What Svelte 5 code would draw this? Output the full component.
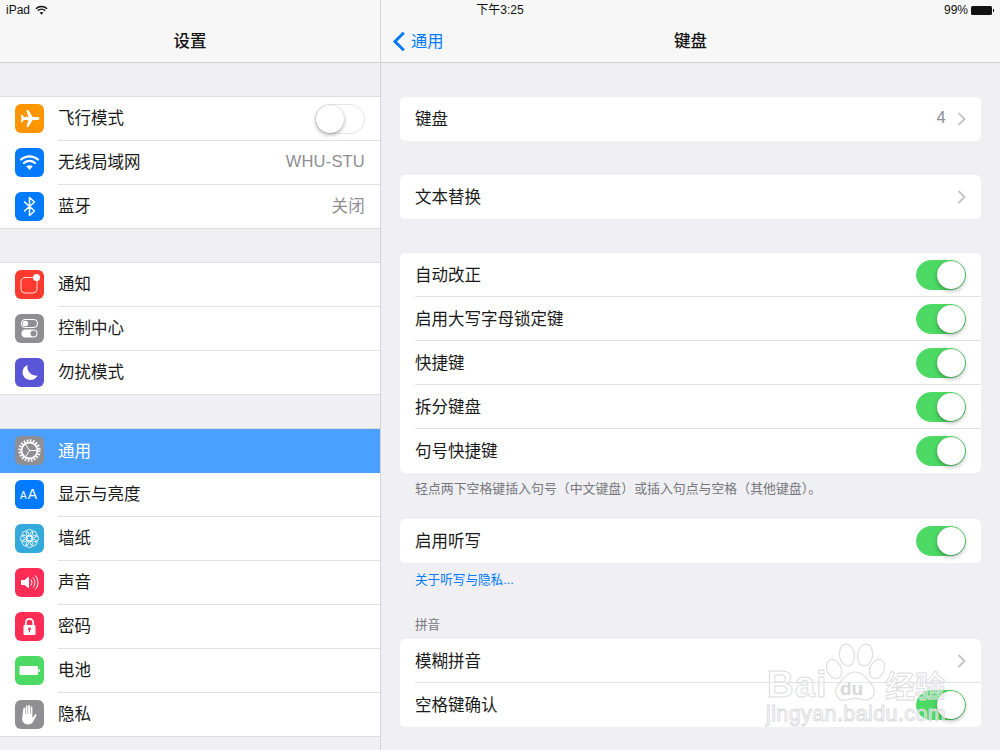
<script>
    const sidebarGroups = [
        [
            { id: 'plane', label: '飞行模式', bg: '#ff9500', toggle: true },
            { id: 'wifi', label: '无线局域网', bg: '#007aff', value: 'WHU-STU' },
            { id: 'bluetooth', label: '蓝牙', bg: '#007aff', value: '关闭' }
        ],
        [
            { id: 'notify', label: '通知', bg: '#ff3b30' },
            { id: 'control', label: '控制中心', bg: '#8e8e93' },
            { id: 'moon', label: '勿扰模式', bg: '#5856d6' }
        ],
        [
            { id: 'gear', label: '通用', bg: '#8e8e93', selected: true },
            { id: 'display', label: '显示与亮度', bg: '#007aff' },
            { id: 'flower', label: '墙纸', bg: '#34aadc' },
            { id: 'sound', label: '声音', bg: '#ff2d55' },
            { id: 'lock', label: '密码', bg: '#ff2d55' },
            { id: 'battery', label: '电池', bg: '#4cd964' },
            { id: 'hand', label: '隐私', bg: '#8e8e93' }
        ]
    ];

    const switches = ['自动改正', '启用大写字母锁定键', '快捷键', '拆分键盘', '句号快捷键'];
    const petals = [0, 45, 90, 135, 180, 225, 270, 315];
</script>

{#snippet icon(id)}
    <svg class="icon" viewBox="0 0 29 29" fill="none" stroke="#fff" stroke-linecap="round" stroke-linejoin="round">
        {#if id === 'plane'}
            <path fill="#fff" stroke="none" d="M24.500 14.500c0-1-1.300-1.600-2.600-1.600h-4.200L13.300 6h-2l2.100 6.900H8.900L7.200 10.800H5.700l.9 3.700-.9 3.700h1.500l1.700-2.100h4.500L11.300 23h2l4.400-6.900h4.200c1.300 0 2.600-.6 2.600-1.600z" />
        {:else if id === 'wifi'}
            <path stroke-width="2.200" d="M6 11.500c4.800-4.300 12.200-4.300 17 0M9 15c3.100-2.800 7.900-2.800 11 0" />
            <path fill="#fff" stroke="none" d="M14.500 22l-3.300-3.700c1.900-1.500 4.700-1.500 6.600 0z" />
        {:else if id === 'bluetooth'}
            <path stroke-width="1.500" d="M9.500 10l10 9-5 4.500v-18l5 4.500-10 9" />
        {:else if id === 'notify'}
            <rect x="6" y="7.500" width="16" height="15.500" rx="4" stroke-width="1" opacity=".8" />
            <circle cx="21.500" cy="7.500" r="3.500" fill="#fff" stroke="none" />
        {:else if id === 'control'}
            <rect x="6.500" y="5.500" width="16" height="8" rx="4" stroke-width="1.200" />
            <circle cx="10.500" cy="9.500" r="2.700" fill="#fff" stroke="none" />
            <rect x="6.500" y="15.500" width="16" height="8" rx="4" fill="#fff" stroke="none" />
            <circle cx="18.500" cy="19.500" r="3" fill="#8e8e93" stroke="none" />
        {:else if id === 'moon'}
            <path fill="#fff" stroke="none" d="M12.500 7c-1 5.500 2.500 10.500 10 10.800-1.500 2.800-4.300 4.200-7 4.200-4.500 0-8-3.400-8-7.700 0-3.300 2-6.100 5-7.300z" />
        {:else if id === 'gear'}
            <circle cx="14.500" cy="14.500" r="10" stroke-width="2.400" stroke-dasharray="1.700 1.442" stroke-linecap="butt" />
            <circle cx="14.500" cy="14.500" r="8" stroke-width="1.800" />
            <path stroke-width="1" d="M14.500 14.500L10 7.500M14.500 14.500h8M14.500 14.500l-4.500 7" />
        {:else if id === 'display'}
            <text class="aa small" x="5" y="19">A</text>
            <text class="aa big" x="12.800" y="19">A</text>
        {:else if id === 'flower'}
            {#each petals as angle}
                <circle cx="14.500" cy="8.800" r="3.400" stroke-width=".8" transform="rotate({angle} 14.500 14.500)" />
            {/each}
            <circle cx="14.500" cy="14.500" r="2.800" stroke-width=".8" />
        {:else if id === 'sound'}
            <path fill="#fff" stroke="none" d="M6 12h3.500l4.500-3.500v12L9.500 17H6z" />
            <path stroke-width="1" d="M16 11.800c1.300 1.500 1.300 3.900 0 5.400M18.200 9.800c2.300 2.700 2.300 6.700 0 9.400M20.500 7.800c3.300 3.900 3.300 9.500 0 13.400" />
        {:else if id === 'lock'}
            <path stroke-width="1.700" d="M10.800 13.500v-3a3.700 3.700 0 0 1 7.400 0v3" />
            <rect x="8.500" y="13" width="12" height="10" rx="1" fill="#fff" stroke="none" />
            <circle cx="14.500" cy="17" r="1.400" fill="#ff2d55" stroke="none" />
            <rect x="14" y="17" width="1" height="3.300" fill="#ff2d55" stroke="none" />
        {:else if id === 'battery'}
            <rect x="4.500" y="10" width="18.500" height="9" rx="1" fill="#fff" stroke="none" />
            <rect x="23.500" y="13" width="1.300" height="3" fill="#fff" stroke="none" />
        {:else if id === 'hand'}
            <path fill="#fff" stroke="none" d="M8.300 8.800c0-1.300 1.800-1.300 1.800 0V14h.6V6.500c0-1.300 1.800-1.300 1.800 0V14h.6V6c0-1.300 1.900-1.300 1.900 0v8h.6V7.500c0-1.300 1.800-1.300 1.800 0v10.300l.7-.6 1.700-2.400c.8-1 2.200-.2 1.600.9l-2.900 5.300c-1.100 2-2.700 3.500-5.400 3.500-3.700 0-5.800-2.300-6-5.400z" />
        {/if}
    </svg>
{/snippet}

{#snippet toggle(on)}
    <span class="toggle" class:on><span class="thumb"></span></span>
{/snippet}

{#snippet chevron()}
    <svg class="chevron" viewBox="0 0 9 14" fill="none"><path d="M1.500 1l6 6-6 6" /></svg>
{/snippet}

<div class="page">
    <aside class="sidebar">
        <header class="nav"><span class="title">设置</span></header>
        {#each sidebarGroups as group}
            <ul class="group">
                {#each group as item}
                    <li class="item" class:selected={item.selected}>
                        <span class="badge" style="background: {item.bg}">{@render icon(item.id)}</span>
                        <div class="item-body">
                            <span class="label">{item.label}</span>
                            {#if item.value}<span class="value">{item.value}</span>{/if}
                            {#if item.toggle}{@render toggle(false)}{/if}
                        </div>
                    </li>
                {/each}
            </ul>
        {/each}
    </aside>

    <main class="detail">
        <header class="nav">
            <a class="back" href="#back">
                <svg viewBox="0 0 14 21" fill="none"><path d="M11.800 1.800L3 10.500l8.800 8.700" /></svg>
                <span>通用</span>
            </a>
            <span class="title">键盘</span>
        </header>

        <section class="card spaced">
            <div class="row"><span class="label">键盘</span><span class="value">4</span>{@render chevron()}</div>
        </section>
        <section class="card spaced">
            <div class="row"><span class="label">文本替换</span>{@render chevron()}</div>
        </section>
        <section class="card spaced">
            {#each switches as text}
                <div class="row"><span class="label">{text}</span>{@render toggle(true)}</div>
            {/each}
        </section>
        <p class="note">轻点两下空格键插入句号（中文键盘）或插入句点与空格（其他键盘）。</p>
        <section class="card">
            <div class="row"><span class="label">启用听写</span>{@render toggle(true)}</div>
        </section>
        <p class="link">关于听写与隐私...</p>
        <h2 class="section-head">拼音</h2>
        <section class="card">
            <div class="row"><span class="label">模糊拼音</span>{@render chevron()}</div>
            <div class="row"><span class="label">空格键确认</span>{@render toggle(true)}</div>
        </section>
    </main>

    <div class="status">
        <div class="status-left">
            <span>iPad</span>
            <svg viewBox="0 0 14 10" width="13" height="10" fill="none" stroke="#111">
                <path stroke-width="1.600" d="M1 3.600c3.300-3 8.700-3 12 0M3.100 5.700c2.200-2 5.600-2 7.800 0" />
                <path fill="#111" stroke="none" d="M7 10L4.900 7.800c1.200-1 3-1 4.200 0z" />
            </svg>
        </div>
        <span class="status-time">下午3:25</span>
        <div class="status-right">
            <span>99%</span>
            <span class="battery"></span>
        </div>
    </div>

    <div class="watermark">
        <svg class="paw" viewBox="0 0 60 62" width="60" height="62" fill="rgba(255,255,255,.35)" stroke="#dedee1" stroke-width="1.200">
            <ellipse cx="22" cy="13" rx="7.500" ry="11" transform="rotate(-8 22 13)" />
            <ellipse cx="40" cy="13" rx="7.500" ry="11" transform="rotate(8 40 13)" />
            <ellipse cx="9" cy="27" rx="7" ry="10" transform="rotate(-25 9 27)" />
            <ellipse cx="52" cy="27" rx="7" ry="10" transform="rotate(25 52 27)" />
            <path d="M30 30c8 0 12 7 17 13 5 7 1 16-8 15-4 0-6-2-9-2s-5 2-9 2c-9 1-13-8-8-15 5-6 9-13 17-13z" />
        </svg>
        <span class="wm wm-bai">Bai</span>
        <span class="wm wm-du">du</span>
        <span class="wm wm-cn">经验</span>
        <span class="wm wm-url">jingyan.baidu.com</span>
    </div>
</div>

<style>
    :global(body) {
        margin: 0;
    }

    .page {
        position: relative;
        display: flex;
        width: 1000px;
        height: 750px;
        overflow: hidden;
        background: #efeff4;
        font-family: "Liberation Sans", "Noto Sans CJK SC", sans-serif;
        color: #1a1a1a;
    }

    .sidebar {
        box-sizing: border-box;
        flex: none;
        width: 381px;
        border-right: 1px solid #d4d4d8;
    }

    .detail {
        flex: 1;
        min-width: 0;
    }

    .nav {
        position: relative;
        box-sizing: border-box;
        display: flex;
        align-items: center;
        justify-content: center;
        height: 63px;
        padding-top: 18px;
        background: #f7f7f8;
        border-bottom: 1px solid #d0d0d3;
    }

    .title {
        font-size: 16.500px;
        font-weight: 500;
        color: #111;
    }

    .back {
        position: absolute;
        left: 11px;
        top: 31px;
        display: flex;
        align-items: center;
        gap: 5px;
        height: 21px;
        color: #007aff;
        font-size: 16.300px;
        text-decoration: none;
    }

    .back span {
        padding-bottom: 4px;
    }

    .back svg {
        width: 14px;
        height: 21px;
    }

    .back path {
        stroke: #007aff;
        stroke-width: 3;
    }

    /* sidebar list */
    .group {
        list-style: none;
        margin: 33px 0 0;
        padding: 0;
        background: #fff;
        border-top: 1px solid #dcdce0;
    }

    .item {
        box-sizing: border-box;
        display: flex;
        align-items: stretch;
        height: 44px;
        padding-left: 15px;
    }

    .item:last-child {
        border-bottom: 1px solid #dcdce0;
    }

    .item.selected {
        background: #4a9fff;
        color: #fff;
    }

    .badge {
        flex: none;
        width: 29px;
        height: 29px;
        margin: 7px 14px 0 0;
        border-radius: 6px;
    }

    .icon {
        display: block;
        width: 29px;
        height: 29px;
    }

    .aa {
        fill: #fff;
        stroke: none;
        font-family: "Liberation Sans", sans-serif;
    }

    .aa.small {
        font-size: 10px;
    }

    .aa.big {
        font-size: 14px;
    }

    .item-body {
        box-sizing: border-box;
        flex: 1;
        display: flex;
        align-items: center;
        justify-content: space-between;
        padding-right: 15px;
        border-bottom: 1px solid #e2e2e6;
    }

    .item:last-child .item-body,
    .item.selected .item-body {
        border-bottom: 0;
    }

    .label {
        padding-bottom: 3px;
        font-size: 16.500px;
    }

    .value {
        padding-bottom: 3px;
        font-size: 16.500px;
        letter-spacing: .2px;
        color: #8e8e93;
    }

    /* detail cards */
    .card {
        margin: 0 19px;
        background: #fff;
        border-radius: 5px;
        overflow: hidden;
    }

    .card.spaced {
        margin-top: 34px;
    }

    .row {
        box-sizing: border-box;
        display: flex;
        align-items: center;
        height: 44px;
        margin-left: 15px;
        padding-right: 15px;
        border-bottom: 1px solid #e2e2e6;
    }

    .row:last-child {
        border-bottom: 0;
    }

    .row .label {
        flex: 1;
        padding-bottom: 2px;
    }

    .row .value {
        margin-right: 11px;
    }

    .chevron {
        flex: none;
        width: 9px;
        height: 14px;
    }

    .chevron path {
        stroke: #c4c4c8;
        stroke-width: 1.800;
    }

    .toggle {
        position: relative;
        box-sizing: border-box;
        display: block;
        flex: none;
        width: 50px;
        height: 30px;
        border: 1px solid #e5e5ea;
        border-radius: 15px;
        background: #fff;
    }

    .toggle.on {
        border-color: #4cd964;
        background: #4cd964;
    }

    .thumb {
        position: absolute;
        left: 0;
        top: 0;
        width: 28px;
        height: 28px;
        border-radius: 50%;
        background: #fff;
        box-shadow: 0 2px 4px rgba(0, 0, 0, .3), 0 0 1px rgba(0, 0, 0, .2);
    }

    .toggle.on .thumb {
        left: 20px;
    }

    .note,
    .link,
    .section-head {
        margin: 0;
        padding-left: 34px;
        font-size: 12.600px;
        font-weight: 400;
        line-height: 16px;
        color: #77777c;
    }

    .note {
        padding-top: 8px;
        padding-bottom: 22px;
        font-size: 12.900px;
    }

    .link {
        padding-top: 9px;
        color: #007aff;
    }

    .section-head {
        padding-top: 29px;
        padding-bottom: 6px;
    }

    /* status bar */
    .status {
        position: absolute;
        left: 0;
        top: 0;
        right: 0;
        display: grid;
        grid-template-columns: 1fr auto 1fr;
        align-items: center;
        height: 20px;
        padding: 0 6px;
        font-size: 12px;
        color: #111;
        box-sizing: border-box;
    }

    .status-left {
        display: flex;
        align-items: center;
        gap: 5px;
    }

    .status-time {
        padding-bottom: 3px;
    }

    .status-right {
        display: flex;
        align-items: center;
        justify-content: flex-end;
        gap: 3px;
    }

    .battery {
        position: relative;
        width: 21px;
        height: 9px;
        background: #111;
        border-radius: 1.500px;
        margin-right: 2px;
    }

    .battery::after {
        content: "";
        position: absolute;
        right: -2px;
        top: 3px;
        width: 1.500px;
        height: 3px;
        background: #111;
    }

    /* baidu watermark */
    .watermark {
        position: absolute;
        left: 765px;
        top: 640px;
        width: 190px;
        height: 95px;
        pointer-events: none;
    }

    .paw {
        position: absolute;
        left: 60px;
        top: 2px;
    }

    .wm {
        position: absolute;
        color: rgba(255, 255, 255, .35);
        -webkit-text-stroke: 1px #dcdcdf;
        font-weight: 700;
        white-space: nowrap;
    }

    .wm-bai {
        left: 2px;
        top: 24px;
        font-size: 37px;
        letter-spacing: 1px;
    }

    .wm-du {
        left: 75px;
        top: 38px;
        font-size: 19px;
        -webkit-text-stroke: 0;
        color: #d8d8da;
    }

    .wm-cn {
        left: 120px;
        top: 22px;
        font-size: 30px;
    }

    .wm-url {
        left: 1px;
        top: 62px;
        font-size: 21.500px;
        font-weight: 400;
        letter-spacing: .4px;
    }
</style>
